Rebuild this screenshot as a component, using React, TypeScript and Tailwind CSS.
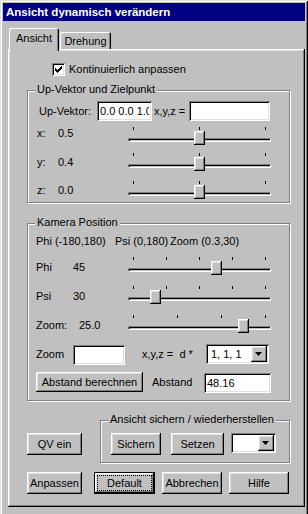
import * as React from 'react';

// Win98 bevels
const raised =
  'shadow-[inset_-1px_-1px_0_#000,inset_1px_1px_0_#fff,inset_-2px_-2px_0_#808080,inset_2px_2px_0_#dfdfdf]';
const sunken =
  'shadow-[inset_1px_1px_0_#808080,inset_-1px_-1px_0_#fff,inset_2px_2px_0_#000,inset_-2px_-2px_0_#dfdfdf]';

const Button = ({ children, className = '' }: { children: React.ReactNode; className?: string }) => (
  <button className={`flex shrink-0 items-center justify-center bg-[#c0c0c0] ${raised} ${className}`}>
    {children}
  </button>
);

const Field = ({ value, className = '' }: { value: string; className?: string }) => (
  <input
    readOnly
    value={value}
    className={`shrink-0 bg-white px-[3px] text-black outline-none ${sunken} ${className}`}
  />
);

const Arrow = () => (
  <span className={`flex h-[16px] w-[16px] shrink-0 items-center justify-center bg-[#c0c0c0] ${raised}`}>
    <svg width="7" height="4" viewBox="0 0 7 4" className="mr-[1px]">
      <polygon points="0,0 7,0 3.5,4" fill="#000" />
    </svg>
  </span>
);

const Combo = ({ value, className = '' }: { value: string; className?: string }) => (
  <div className={`flex shrink-0 items-center bg-white p-[2px] ${sunken} ${className}`}>
    <span className="flex-1 pl-[3px]">{value}</span>
    <Arrow />
  </div>
);

const Group = ({
  label,
  className = '',
  children,
}: {
  label: string;
  className?: string;
  children?: React.ReactNode;
}) => (
  <div
    className={`relative shrink-0 border border-[#808080] shadow-[inset_1px_1px_0_#fff,1px_1px_0_#fff] ${className}`}
  >
    <span className="absolute left-[7px] top-[-8px] whitespace-nowrap bg-[#c0c0c0] px-[2px]">{label}</span>
    {children}
  </div>
);

const Slider = ({ pct, ticks }: { pct: number; ticks: number[] }) => (
  <div className="relative h-[18px] w-[143px] shrink-0">
    {ticks.map((t) => (
      <span
        key={t}
        className="absolute top-0 h-[3px] w-px bg-black"
        style={{ left: 5 + Math.round(t * 132) }}
      />
    ))}
    <div className="absolute left-0 top-[11px] h-[4px] w-full border border-[#808080] border-b-white border-r-white shadow-[inset_1px_1px_0_#000]" />
    <div
      className={`absolute top-[4px] h-[14px] w-[11px] bg-[#c0c0c0] ${raised}`}
      style={{ left: Math.round(pct * 132) }}
    />
  </div>
);

const SliderRow = ({
  label,
  value,
  labelW,
  valueW,
  pct,
  ticks,
  textClass,
  className = '',
}: {
  label: string;
  value: string;
  labelW: string;
  valueW: string;
  pct: number;
  ticks: number[];
  textClass: string;
  className?: string;
}) => (
  <div className={`flex items-start ${className}`}>
    <span className={`shrink-0 ${labelW} ${textClass}`}>{label}</span>
    <span className={`shrink-0 ${valueW} ${textClass}`}>{value}</span>
    <Slider pct={pct} ticks={ticks} />
  </div>
);

export default function App() {
  return (
    <div className="h-[514px] w-[308px] overflow-hidden">
      <div className="flex h-[514px] w-[308px] flex-col bg-[#c0c0c0] font-['Liberation_Sans',Arial,sans-serif] text-[11px] leading-[13px] text-black shadow-[inset_1px_1px_0_#dfdfdf,inset_-1px_0_0_#000,inset_2px_2px_0_#fff,inset_-2px_0_0_#808080]">
        {/* title bar */}
        <div className="ml-[3px] mt-[3px] flex h-[18px] w-[302px] items-center bg-[#000080] pl-[3px]">
          <span className="text-[11.5px] font-bold text-white">Ansicht dynamisch verändern</span>
        </div>

        {/* tabs */}
        <div className="relative z-10 ml-[9px] mt-[7px] flex h-[21px] items-start">
          <div className="flex h-[23px] w-[50px] justify-center rounded-t-[2px] bg-[#c0c0c0] pt-[4px] shadow-[inset_1px_1px_0_#fff,inset_-1px_0_0_#000,inset_-2px_0_0_#808080]">
            Ansicht
          </div>
          <div className="ml-[1px] mt-[4px] flex h-[17px] w-[51px] justify-center rounded-t-[2px] pt-[3px] shadow-[inset_1px_1px_0_#fff,inset_-1px_0_0_#000,inset_-2px_0_0_#808080]">
            Drehung
          </div>
        </div>

        {/* tab panel */}
        <div className={`ml-[8px] flex h-[458px] w-[297px] flex-col ${raised}`}>
          <div className="ml-[44px] mt-[14px] flex items-center">
            <span className={`flex h-[13px] w-[13px] items-center justify-center bg-white ${sunken}`}>
              <svg width="7" height="7" viewBox="0 0 7 7" shapeRendering="crispEdges">
                <path d="M6 0h1v3h-1v1h-1v1h-1v1h-1v1h-1v-1h-1v-1h-1v-3h1v1h1v1h1v-1h1v-1h1z" fill="#000" />
              </svg>
            </span>
            <span className="ml-[4px]">Kontinuierlich anpassen</span>
          </div>

          {/* Up-Vektor */}
          <Group label="Up-Vektor und Zielpunkt" className="ml-[19px] mt-[14px] h-[113px] w-[263px]">
            <div className="flex flex-col">
              <div className="mt-[10px] flex h-[20px] items-center pl-[11px]">
                <span className="w-[58px] shrink-0">Up-Vektor:</span>
                <Field value="0.0 0.0 1.0" className="h-[20px] w-[55px]" />
                <span className="ml-[2px] w-[35px] shrink-0">x,y,z =</span>
                <Field value="" className="h-[20px] w-[81px]" />
              </div>
              <div className="pl-[9px]">
                <SliderRow label="x:" value="0.5" labelW="w-[21px]" valueW="w-[70px]" pct={0.5} ticks={[0, 0.5, 1]} textClass="mt-0" className="mt-[6px]" />
                <SliderRow label="y:" value="0.4" labelW="w-[21px]" valueW="w-[70px]" pct={0.5} ticks={[0, 0.5, 1]} textClass="mt-[3px]" className="mt-[8px]" />
                <SliderRow label="z:" value="0.0" labelW="w-[21px]" valueW="w-[70px]" pct={0.5} ticks={[0, 0.5, 1]} textClass="mt-[3px]" className="mt-[10px]" />
              </div>
            </div>
          </Group>

          {/* Kamera */}
          <Group label="Kamera Position" className="ml-[19px] mt-[20px] h-[178px] w-[263px]">
            <div className="flex flex-col pl-[8px]">
              <div className="mt-[11px] flex whitespace-nowrap">
                <span className="w-[79px]">Phi (-180,180)</span>
                <span className="w-[55px]">Psi (0,180)</span>
                <span>Zoom (0.3,30)</span>
              </div>
              <SliderRow label="Phi" value="45" labelW="w-[37px]" valueW="w-[55px]" pct={0.625} ticks={[0, 0.25, 0.5, 0.75, 1]} textClass="mt-[4px]" className="mt-[9px]" />
              <SliderRow label="Psi" value="30" labelW="w-[37px]" valueW="w-[55px]" pct={30 / 180} ticks={[0, 0.25, 0.5, 0.75, 1]} textClass="mt-[4px]" className="mt-[11px]" />
              <SliderRow label="Zoom:" value="25.0" labelW="w-[43px]" valueW="w-[49px]" pct={24.7 / 29.7} ticks={[0, 1 / 3, 2 / 3, 1]} textClass="mt-[4px]" className="mt-[11px]" />

              <div className="mt-[11px] flex h-[20px] items-center">
                <span className="w-[37px] shrink-0">Zoom</span>
                <Field value="" className="mt-[1px] h-[20px] w-[52px]" />
                <span className="ml-[17px] w-[64px] shrink-0 whitespace-nowrap">x,y,z = &nbsp;d *</span>
                <Combo value="1, 1, 1" className="h-[20px] w-[63px]" />
              </div>

              <div className="mt-[8px] flex h-[21px] items-start">
                <Button className="h-[20px] w-[107px]">Abstand berechnen</Button>
                <span className="ml-[9px] mt-[4px] w-[52px] shrink-0">Abstand</span>
                <Field value="48.16" className="mt-[1px] h-[20px] w-[67px]" />
              </div>
            </div>
          </Group>

          {/* QV + Ansicht sichern */}
          <div className="mt-[19px] flex items-start">
            <Button className="ml-[19px] mt-[13px] h-[22px] w-[55px]">QV ein</Button>
            <Group label="Ansicht sichern / wiederherstellen" className="ml-[18px] h-[43px] w-[190px]">
              <div className="mt-[12px] flex items-start">
                <Button className="ml-[10px] h-[22px] w-[50px]">Sichern</Button>
                <Button className="ml-[10px] h-[22px] w-[53px]">Setzen</Button>
                <Combo value="" className="ml-[7px] h-[20px] w-[45px]" />
              </div>
            </Group>
          </div>

          {/* dialog buttons */}
          <div className="mt-[9px] flex items-start">
            <Button className="ml-[19px] h-[22px] w-[55px]">Anpassen</Button>
            <button className="ml-[12px] h-[22px] w-[61px] shrink-0 border border-black bg-[#c0c0c0]">
              <span className={`flex h-full w-full p-[2px] ${raised}`}>
                <span className="flex flex-1 items-center justify-center border border-dotted border-black">
                  Default
                </span>
              </span>
            </button>
            <Button className="ml-[7px] h-[22px] w-[60px]">Abbrechen</Button>
            <Button className="ml-[7px] h-[22px] w-[60px]">Hilfe</Button>
          </div>
        </div>
      </div>
    </div>
  );
}
